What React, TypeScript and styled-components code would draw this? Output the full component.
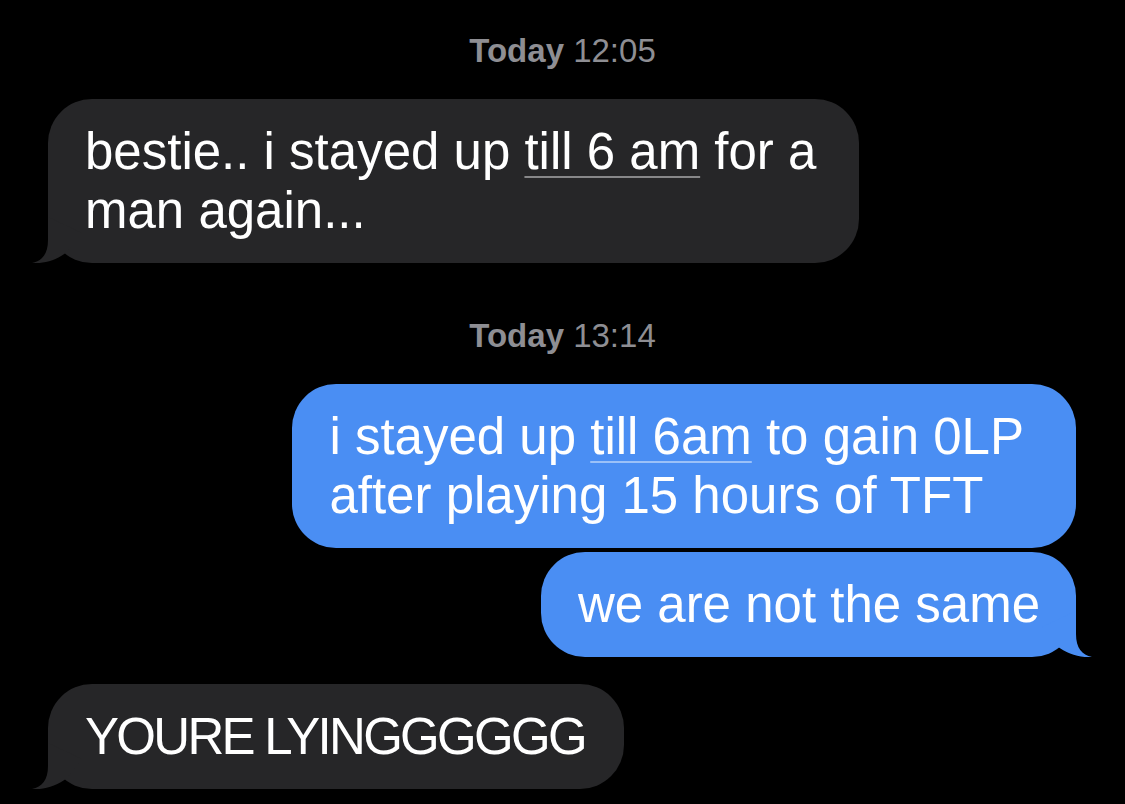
import React from 'react';
import styled, { createGlobalStyle } from 'styled-components';

const GlobalStyle = createGlobalStyle`
  html, body {
    margin: 0;
    padding: 0;
    background: #000;
  }
`;

const Screen = styled.main`
  min-height: 100vh;
  display: flex;
  flex-direction: column;
  padding-top: 32px;
  background: #000;
  font-family: 'Liberation Sans', Arial, sans-serif;
  box-sizing: border-box;
`;

const Section = styled.section`
  display: flex;
  flex-direction: column;
  gap: 27px;

  & + & {
    margin-top: 54px;
  }
`;

const Stamp = styled.div`
  text-align: center;
  font-size: 33px;
  line-height: 38px;
  color: #8e8e93;
  margin-bottom: 2px;

  b {
    font-weight: 700;
  }
`;

const Group = styled.div`
  display: flex;
  flex-direction: column;
  gap: 4px;
`;

type Side = 'me' | 'them';

const Bubble = styled.div<{ $side: Side; $tracking?: number; $padEnd?: number }>`
  position: relative;
  align-self: ${(p) => (p.$side === 'me' ? 'flex-end' : 'flex-start')};
  margin: ${(p) => (p.$side === 'me' ? '0 49px 0 0' : '0 0 0 48px')};
  padding: 23px ${(p) => p.$padEnd ?? 39}px 23px 37px;
  border-radius: 44px;
  background: ${(p) => (p.$side === 'me' ? '#4a8ef3' : '#262628')};
  color: #fff;
  font-size: 51px;
  line-height: 59px;
  white-space: nowrap;
  letter-spacing: ${(p) => p.$tracking ?? 0}px;
`;

const Marked = styled.span`
  text-decoration: underline;
  text-decoration-color: rgba(255, 255, 255, 0.45);
  text-decoration-thickness: 2px;
  text-underline-offset: 7px;
`;

const TailSvg = styled.svg<{ $side: Side }>`
  position: absolute;
  bottom: 0;
  width: 64px;
  height: 46px;
  ${(p) => (p.$side === 'me' ? 'right: -16px; transform: scaleX(-1);' : 'left: -16px;')}
`;

const Tail: React.FC<{ side: Side }> = ({ side }) => (
  <TailSvg $side={side} viewBox="-16 -46 64 46">
    <path
      d="M0 -46 L0 -23 C0 -9 -6 -2 -16 0 C-4 1 9 -3 19 -11 L34 -30 Z"
      fill={side === 'me' ? '#4a8ef3' : '#262628'}
    />
  </TailSvg>
);

type Msg = { lines: React.ReactNode[]; tracking?: number; padEnd?: number };

const Message: React.FC<{ side: Side; msg: Msg; tail: boolean }> = ({ side, msg, tail }) => (
  <Bubble $side={side} $tracking={msg.tracking} $padEnd={msg.padEnd}>
    {msg.lines.map((l, i) => (
      <React.Fragment key={i}>
        {i > 0 && <br />}
        {l}
      </React.Fragment>
    ))}
    {tail && <Tail side={side} />}
  </Bubble>
);

const MessageGroup: React.FC<{ side: Side; msgs: Msg[] }> = ({ side, msgs }) => (
  <Group>
    {msgs.map((m, i) => (
      <Message key={i} side={side} msg={m} tail={i === msgs.length - 1} />
    ))}
  </Group>
);

export default function App() {
  return (
    <>
      <GlobalStyle />
      <Screen>
        <Section>
          <Stamp>
            <b>Today</b> 12:05
          </Stamp>
          <MessageGroup
            side="them"
            msgs={[
              {
                lines: [
                  <>
                    bestie.. i stayed up <Marked>till 6 am</Marked> for a
                  </>,
                  'man again...',
                ],
                padEnd: 43,
              },
            ]}
          />
        </Section>
        <Section>
          <Stamp>
            <b>Today</b> 13:14
          </Stamp>
          <MessageGroup
            side="me"
            msgs={[
              {
                lines: [
                  <>
                    i stayed up <Marked>till 6am</Marked> to gain 0LP
                  </>,
                  'after playing 15 hours of TFT',
                ],
                padEnd: 52,
              },
              { lines: ['we are not the same'], padEnd: 36 },
            ]}
          />
          <MessageGroup side="them" msgs={[{ lines: ['YOURE LYINGGGGGG'], tracking: -2.7 }]} />
        </Section>
      </Screen>
    </>
  );
}
